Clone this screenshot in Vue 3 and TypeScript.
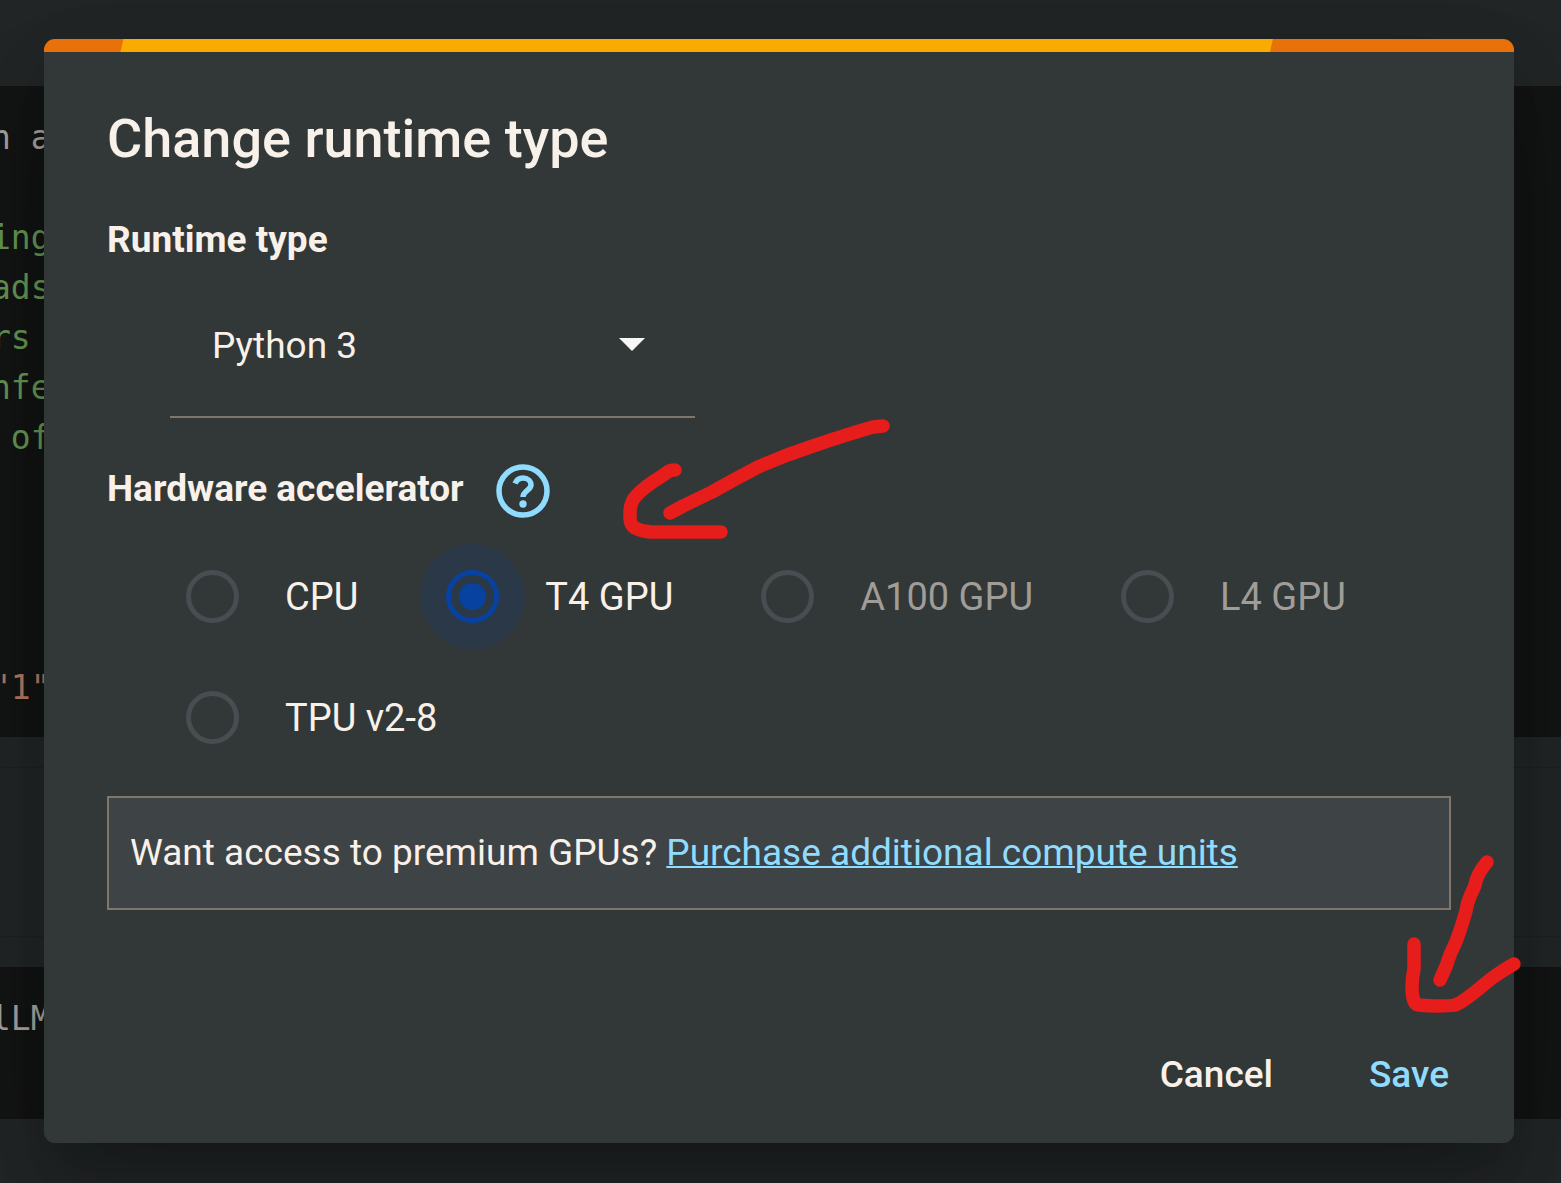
<script setup lang="ts">
import { ref } from 'vue'

interface Accelerator {
  id: string
  label: string
  disabled?: boolean
}

interface CodeLine {
  text: string
  kind: 'plain' | 'comment' | 'string'
}

const accelerators: Accelerator[] = [
  { id: 'cpu', label: 'CPU' },
  { id: 't4', label: 'T4 GPU' },
  { id: 'a100', label: 'A100 GPU', disabled: true },
  { id: 'l4', label: 'L4 GPU', disabled: true },
  { id: 'tpu', label: 'TPU v2-8' },
]

const upperCell: CodeLine[] = [
  { text: 'n a', kind: 'plain' },
  { text: '', kind: 'plain' },
  { text: 'ing', kind: 'comment' },
  { text: 'ads', kind: 'comment' },
  { text: 'rs', kind: 'comment' },
  { text: 'nfe', kind: 'comment' },
  { text: ' of', kind: 'comment' },
  { text: '', kind: 'plain' },
  { text: '', kind: 'plain' },
  { text: '', kind: 'plain' },
  { text: '', kind: 'plain' },
  { text: '"1"', kind: 'string' },
]

const runtime = ref('python3')
const selected = ref('t4')
</script>

<template>
  <div class="page">
    <div class="notebook" aria-hidden="true">
      <div class="cell">
        <div v-for="(line, i) in upperCell" :key="i" class="line" :class="line.kind">{{ line.text }}</div>
      </div>
      <div class="output"></div>
      <div class="cell">
        <div class="line plain">lLM</div>
      </div>
    </div>

    <form class="dialog" role="dialog" aria-labelledby="dialog-title" @submit.prevent>
      <div class="progress"><div class="progress-bar"></div></div>
      <div class="body">
        <h1 id="dialog-title">Change runtime type</h1>

        <label class="heading runtime-label" for="runtime">Runtime type</label>
        <div class="select">
          <select id="runtime" v-model="runtime">
            <option value="python3">Python 3</option>
            <option value="r">R</option>
          </select>
          <svg class="caret" viewBox="0 0 26 13" aria-hidden="true"><path d="M0 0h26L13 13z" /></svg>
        </div>

        <div class="accelerator-head">
          <h2 id="accelerator" class="heading">Hardware accelerator</h2>
          <button type="button" class="help" aria-label="Help">
            <svg viewBox="0 0 54 54" aria-hidden="true">
              <circle cx="27" cy="27" r="24" />
              <path d="M19 19.5C20.500 16 23.500 14 27 14C31.500 14 35 17 35 21C35 26 27 27 27 33" />
              <circle class="dot" cx="27" cy="40" r="3.7" />
            </svg>
          </button>
        </div>

        <div class="options" role="radiogroup" aria-labelledby="accelerator">
          <label
            v-for="item in accelerators"
            :key="item.id"
            class="option"
            :class="{ active: selected === item.id, disabled: item.disabled }"
          >
            <span class="halo">
              <input v-model="selected" type="radio" name="accelerator" :value="item.id" :disabled="item.disabled" />
            </span>
            <span>{{ item.label }}</span>
          </label>
        </div>

        <p class="notice">
          Want access to premium GPUs? <a href="#">Purchase additional compute units</a>
        </p>

        <div class="actions">
          <button type="button">Cancel</button>
          <button type="submit" class="primary">Save</button>
        </div>
      </div>

      <svg class="mark mark-options" viewBox="615 410 285 135" aria-hidden="true">
        <path d="M670 513L683 506L712 492Q735 479 758 467Q785 455 813 446Q845 435 873 427L883 426" />
        <path d="M675 470Q671 470 669 471L662 476Q644 487 637 495Q630 502 630 512V518Q630 525 635 528Q643 532 652 532H721" />
      </svg>
      <svg class="mark mark-save" viewBox="1400 850 126 170" aria-hidden="true">
        <path d="M1487 862Q1478 873 1476 881Q1475 887 1471 894Q1467 903 1466 911Q1460 932 1455 944Q1449 956 1447 964L1440 980" />
        <path d="M1414 944V969Q1412 978 1412 987Q1412 1005 1419 1005Q1428 1006 1437 1006Q1450 1006 1455 1005C1468 1000 1482 985 1495 976Q1505 969 1514 964" />
      </svg>
    </form>
  </div>
</template>

<style>
body {
  margin: 0;
  background: #222627;
}
</style>

<style scoped>
.page {
  display: grid;
  min-height: 100vh;
  overflow: hidden;
  font-family: Roboto, sans-serif;
  font-size: 37px;
  line-height: 44px;
  color: #f8f1ea;
}

.notebook,
.dialog {
  grid-area: 1 / 1;
}

.notebook {
  padding: 86px 0 64px;
  overflow: hidden;
  font-family: 'DejaVu Sans Mono', monospace;
  font-size: 33px;
  line-height: 50px;
}

.cell {
  box-sizing: border-box;
  height: 152px;
  padding-top: 27px;
  background: #131414;
}

.cell:first-child {
  height: 651px;
}

.line {
  min-height: 50px;
  margin-left: -9px;
  white-space: pre;
}

.plain {
  color: #aaa5a0;
}

.comment {
  color: #659854;
}

.string {
  color: #b37a62;
}

.output {
  height: 168px;
  margin: 30px 0;
  border: solid #1e2122;
  border-width: 1px 0;
}

.dialog {
  position: relative;
  align-self: start;
  margin: 39px 47px 40px 44px;
  border-radius: 11px;
  background: #323737;
  box-shadow:
    0 29px 39px -18px rgb(0 0 0 / 20%),
    0 63px 100px 8px rgb(0 0 0 / 14%),
    0 24px 121px 21px rgb(0 0 0 / 12%);
}

.progress {
  height: 13px;
  border-radius: 11px 11px 0 0;
  overflow: hidden;
  background: #e8710a;
}

.progress-bar {
  height: 100%;
  margin: 0 16.4% 0 5.2%;
  background: #f9ab00;
  clip-path: polygon(3px 0, 100% 0, calc(100% - 3px) 100%, 0 100%);
}

.body {
  display: flex;
  flex-direction: column;
  padding: 57px 63px 46px;
}

h1 {
  margin: 0;
  font-size: 54px;
  font-weight: 500;
  line-height: 60px;
}

.heading {
  margin: 0;
  font-size: 37px;
  font-weight: 700;
  line-height: 50px;
}

.runtime-label {
  margin-top: 46px;
}

.select {
  display: grid;
  width: 525px;
  margin: 57px 0 0 63px;
  border-bottom: 2px solid #80766a;
}

select,
.caret {
  grid-area: 1 / 1;
}

select {
  height: 94px;
  padding: 2px 42px 48px;
  border: 0;
  appearance: none;
  background: none;
  color: inherit;
  font: inherit;
}

.caret {
  justify-self: end;
  width: 26px;
  margin: 16px 50px 0 0;
  fill: #f7f7f7;
  pointer-events: none;
}

button {
  padding: 0;
  border: 0;
  background: none;
  color: inherit;
  font: inherit;
  font-weight: 500;
}

.accelerator-head {
  display: flex;
  align-items: flex-start;
  gap: 32px;
  margin-top: 46px;
}

.help {
  display: flex;
}

.help svg {
  width: 54px;
  height: 54px;
  fill: none;
  stroke: #8fdcff;
  stroke-width: 5.5;
}

.help .dot {
  fill: #8fdcff;
  stroke: none;
}

.options {
  display: flex;
  flex-wrap: wrap;
  gap: 16px 62px;
  margin: 26px 0 0 53px;
  font-size: 38px;
}

.option {
  display: flex;
  align-items: center;
  gap: 20px;
}

.halo {
  display: grid;
  place-items: center;
  width: 105px;
  height: 105px;
  border-radius: 50%;
}

.active .halo {
  background: #2b3848;
}

input {
  display: grid;
  place-items: center;
  width: 53px;
  height: 53px;
  margin: 0;
  border: 5px solid #474d50;
  border-radius: 50%;
  appearance: none;
}

input:checked {
  border-color: #0842a0;
}

input:checked::before {
  width: 27px;
  height: 27px;
  border-radius: 50%;
  background: #0842a0;
  content: '';
}

.disabled {
  color: #a09c98;
}

.notice {
  margin: 26px 0 0;
  padding: 33px 21px;
  border: 2px solid #80766a;
  background: #3e4346;
}

a {
  color: #8fdcff;
  text-decoration-thickness: 2px;
}

.actions {
  display: flex;
  justify-content: flex-end;
  gap: 96px;
  margin-top: 143px;
  padding-right: 2px;
}

.primary {
  color: #8fdcff;
}

.mark {
  position: absolute;
  fill: none;
  stroke: #e71d1c;
  stroke-width: 13.5;
  stroke-linecap: round;
  stroke-linejoin: round;
  pointer-events: none;
}

.mark-options {
  top: 371px;
  left: 571px;
  width: 285px;
}

.mark-save {
  right: -12px;
  bottom: 123px;
  width: 126px;
}
</style>
